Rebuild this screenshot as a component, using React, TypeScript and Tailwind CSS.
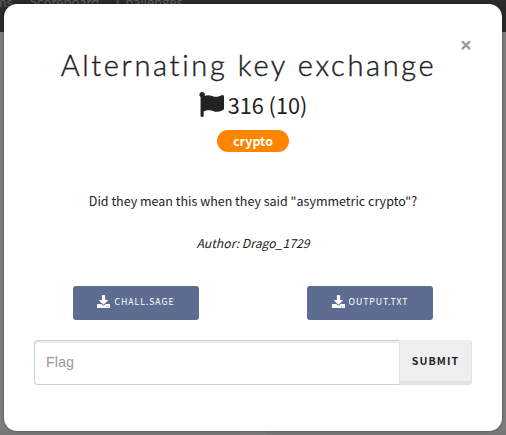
import { FaFlag, FaDownload } from "react-icons/fa";

const sans = "font-['Noto_Sans_CJK_SC','Noto_Sans',sans-serif]";

function FileButton({ name }: { name: string }) {
  return (
    <a className="flex h-[34px] w-[126px] items-center justify-center gap-[4px] rounded-[3px] bg-[#5d6d92] pb-[3px] text-white">
      <FaDownload className="size-[13px]" />
      <span className="whitespace-nowrap pt-px text-[8.8px] leading-none tracking-[0.9px]">{name}</span>
    </a>
  );
}

export default function App() {
  return (
    <div className={`relative h-[435px] w-[506px] overflow-hidden bg-[#7d7c7b] text-[#222] ${sans}`}>
      <div className="flex h-8 gap-[17px] bg-[#2a2a2a] font-['Lato',sans-serif] text-[14px] leading-4 text-[#5e5e5e]">
        <span className="-ml-[26px] -mt-[6px]">Teams</span>
        <span className="-mt-[6px]">Scoreboard</span>
        <span className="-mt-[6px]">Challenges</span>
      </div>
      <div className="absolute inset-x-0 bottom-0 flex h-[5px] justify-center bg-[#777]">
        <span className="w-[26px] bg-[#7d7c7b]" />
      </div>
      <main className="absolute left-1 top-1 flex h-[427px] w-[498px] flex-col rounded-[13px] bg-white px-[30px] shadow-[0_0_3px_rgba(0,0,0,0.4)]">
        <button className="absolute right-[30px] top-[35px] size-[12px] text-[#999]" aria-label="Close">
          <svg viewBox="0 0 12 12" className="size-3" stroke="currentColor" strokeWidth="2.3"><path d="M2 2.2 10 10.1M10 2.2 2 10.1" /></svg>
        </button>
        <h1 className="mt-[43px] whitespace-nowrap pr-[9px] text-center font-['Lato',sans-serif] text-[29px] font-light leading-9 tracking-[2.65px] [-webkit-text-stroke:0.4px_#222]">Alternating key exchange</h1>
        <div className="mt-[8px] flex h-[26px] items-center justify-center gap-[4px] text-[21.7px] leading-none">
          <FaFlag className="size-[25px]" />
          <span className="pt-[1px]">316 (10)</span>
        </div>
        <span className="mt-[13px] flex h-[22px] w-[72px] items-center justify-center self-center rounded-full bg-[#ff8400] text-[12.5px] font-bold leading-none text-white">crypto</span>
        <p className="mt-[39px] text-center text-[12.5px] leading-5">Did they mean this when they said "asymmetric crypto"?</p>
        <p className="mt-[22px] text-center text-[12.2px] italic leading-5">Author: Drago_1729</p>
        <div className="mt-[33px] flex justify-between px-[39px]">
          <FileButton name="CHALL.SAGE" />
          <FileButton name="OUTPUT.TXT" />
        </div>
        <form className="mt-5 flex h-[45px]">
          <input placeholder="Flag" className="min-w-0 flex-1 rounded-l-[4px] border border-r-0 border-[#c9d0d9] px-[11px] font-['Liberation_Sans',sans-serif] text-[14.4px] shadow-[inset_0_2px_0_#ececee] placeholder:text-[#999]" />
          <button type="button" className="w-[73px] rounded-r-[3px] border border-b-4 border-[#e2e2e2] border-t-[#efefef] bg-[#efefef] text-[10.6px] font-bold leading-none tracking-[1.1px] text-[#222]">SUBMIT</button>
        </form>
      </main>
    </div>
  );
}
